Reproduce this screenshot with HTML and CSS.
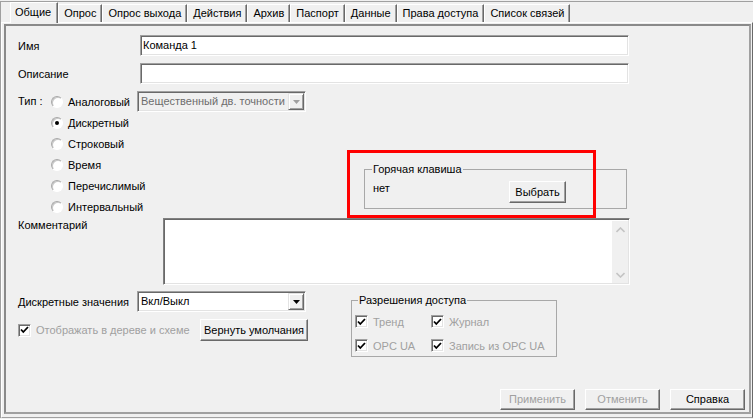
FILE: index.html
```html
<!DOCTYPE html>
<html lang="ru">
<head>
<meta charset="utf-8">
<title>Свойства</title>
<link rel="stylesheet" href="styles.css">
</head>
<body>
<div class="window">
  <div class="tabs">
    <div class="tab active">Общие</div>
    <div class="tab">Опрос</div>
    <div class="tab">Опрос выхода</div>
    <div class="tab">Действия</div>
    <div class="tab">Архив</div>
    <div class="tab">Паспорт</div>
    <div class="tab">Данные</div>
    <div class="tab">Права доступа</div>
    <div class="tab">Список связей</div>
  </div>
  <div class="page">
    <div class="frame">
      <div class="content">
        <div class="row">
          <span class="lbl lbl-main">Имя</span>
          <div class="edit">Команда 1</div>
        </div>
        <div class="row">
          <span class="lbl lbl-main">Описание</span>
          <div class="edit"></div>
        </div>

        <div class="type">
          <div class="type-left">
            <span class="type-lbl">Тип :</span>
            <div class="radios">
              <div class="rrow first">
                <span class="rl"><span class="radio"></span><span>Аналоговый</span></span>
                <div class="select disabled">
                  <span class="value">Вещественный дв. точности</span>
                  <span class="dd"><svg width="7" height="4" viewBox="0 0 7 4"><path d="M0 0h7L3.5 4z"/></svg></span>
                </div>
              </div>
              <div class="rrow"><span class="radio checked"></span><span>Дискретный</span></div>
              <div class="rrow"><span class="radio"></span><span>Строковый</span></div>
              <div class="rrow"><span class="radio"></span><span>Время</span></div>
              <div class="rrow"><span class="radio"></span><span>Перечислимый</span></div>
              <div class="rrow"><span class="radio"></span><span>Интервальный</span></div>
            </div>
          </div>
          <fieldset class="group hotkey">
            <legend>Горячая клавиша</legend>
            <div class="hk-row">
              <span class="hk-val">нет</span>
              <button class="btn btn-choose" type="button">Выбрать</button>
            </div>
          </fieldset>
        </div>

        <div class="row comment-row">
          <span class="lbl lbl-comment">Комментарий</span>
          <div class="memo">
            <div class="memo-text"></div>
            <div class="vscroll">
              <svg width="9" height="6" viewBox="0 0 9 6"><path d="M0.5 5L4.5 1L8.5 5" fill="none" stroke="#c4c4c4" stroke-width="1.6"/></svg>
              <svg width="9" height="6" viewBox="0 0 9 6"><path d="M0.5 1L4.5 5L8.5 1" fill="none" stroke="#c4c4c4" stroke-width="1.6"/></svg>
            </div>
          </div>
        </div>

        <div class="bottom">
          <div class="bottom-left">
            <div class="disc-row">
              <span class="lbl lbl-disc">Дискретные значения</span>
              <div class="select">
                <span class="value">Вкл/Выкл</span>
                <span class="dd"><svg width="7" height="4" viewBox="0 0 7 4"><path d="M0 0h7L3.5 4z"/></svg></span>
              </div>
            </div>
            <div class="show-row">
              <span class="show-lbl">
                <span class="check"><svg width="9" height="8" viewBox="0 0 9 8"><path d="M1 3.5L3.3 6L8 1" fill="none" stroke="#000" stroke-width="1.8"/></svg></span>
                <span class="muted">Отображать в дереве и схеме</span>
              </span>
              <button class="btn btn-default" type="button">Вернуть умолчания</button>
            </div>
          </div>
          <fieldset class="group perm">
            <legend>Разрешения доступа</legend>
            <div class="perm-grid">
              <span class="citem"><span class="check"><svg width="9" height="8" viewBox="0 0 9 8"><path d="M1 3.5L3.3 6L8 1" fill="none" stroke="#000" stroke-width="1.8"/></svg></span><span class="muted">Тренд</span></span>
              <span class="citem"><span class="check"><svg width="9" height="8" viewBox="0 0 9 8"><path d="M1 3.5L3.3 6L8 1" fill="none" stroke="#000" stroke-width="1.8"/></svg></span><span class="muted">Журнал</span></span>
              <span class="citem"><span class="check"><svg width="9" height="8" viewBox="0 0 9 8"><path d="M1 3.5L3.3 6L8 1" fill="none" stroke="#000" stroke-width="1.8"/></svg></span><span class="muted">OPC UA</span></span>
              <span class="citem"><span class="check"><svg width="9" height="8" viewBox="0 0 9 8"><path d="M1 3.5L3.3 6L8 1" fill="none" stroke="#000" stroke-width="1.8"/></svg></span><span class="muted">Запись из OPC UA</span></span>
            </div>
          </fieldset>
        </div>
      </div>

      <div class="actions">
        <button class="btn btn-act" type="button" disabled>Применить</button>
        <button class="btn btn-act" type="button" disabled>Отменить</button>
        <button class="btn btn-act" type="button">Справка</button>
      </div>

      <div class="highlight"></div>
    </div>
  </div>
</div>
</body>
</html>
```
FILE: styles.css
```css
* { box-sizing: border-box; }
html, body { margin: 0; padding: 0; }
body {
  width: 753px;
  height: 419px;
  overflow: hidden;
  background: #f0f0f0;
  font-family: "Liberation Sans", Arial, sans-serif;
  font-size: 11px;
  color: #000;
}

.window {
  margin-top: 1px;
  width: 753px;
  height: 417px;
  border-top: 1px solid #a0a0a0;
  border-left: 1px solid #a0a0a0;
  display: flex;
  flex-direction: column;
}

/* tabs */
.tabs {
  flex: none;
  height: 20px;
  display: flex;
  align-items: flex-end;
  padding-left: 9px;
}
.tab {
  height: 18px;
  line-height: 17px;
  padding: 0 5px 0 5px;
  border-top: 1px solid #fff;
  border-left: 1px solid #fff;
  border-right: 1px solid #696969;
  box-shadow: inset -1px 0 0 #a0a0a0;
  white-space: nowrap;
}
.tab.active {
  height: 21px;
  line-height: 18px;
  margin-bottom: -1px;
  position: relative;
  z-index: 1;
  background: #f0f0f0;
  padding: 0 6px 0 4px;
}

.page {
  flex: 1;
  display: flex;
  border-top: 1px solid #fff;
  border-left: 1px solid #fff;
  border-right: 1px solid #696969;
  border-bottom: 1px solid #a0a0a0;
  padding: 1px 1px 3px 2px;
}
.frame {
  flex: 1;
  position: relative;
  display: flex;
  flex-direction: column;
  border: 2px solid #a0a0a0;
  border-top-color: #8a8a8a;
  border-left-color: #8a8a8a;
}

.content {
  padding: 9px 0 0 12px;
}

.row {
  display: flex;
  align-items: center;
  height: 21px;
  margin-bottom: 7px;
}
.lbl { display: block; white-space: nowrap; }
.lbl-main { width: 122px; }

.edit {
  width: 489px;
  height: 21px;
  background: #fff;
  border: 1px solid;
  border-color: #a0a0a0 #fff #fff #a0a0a0;
  box-shadow: inset 1px 1px 0 #696969, inset -1px -1px 0 #e3e3e3;
  padding: 2px 0 0 2px;
  line-height: 15px;
}

/* type block */
.type {
  display: flex;
  height: 127px;
}
.type-left {
  width: 346px;
  display: flex;
}
.type-lbl {
  width: 33px;
  height: 20px;
  line-height: 20px;
}
.radios { display: flex; flex-direction: column; }
.rrow {
  display: flex;
  align-items: center;
  height: 21.2px;
}
.rrow.first { height: 21px; }
.rl { display: flex; align-items: center; width: 86px; }
.radio {
  width: 12px;
  height: 12px;
  border-radius: 50%;
  background: #fff;
  border: 1px solid;
  border-color: #a8a8a8 #fff #fff #a8a8a8;
  box-shadow: inset 1px 1px 0 #c8c8c8;
  margin-right: 5px;
  flex: none;
  position: relative;
}
.radio.checked::after {
  content: "";
  position: absolute;
  left: 3px;
  top: 3px;
  width: 4px;
  height: 4px;
  border-radius: 50%;
  background: #000;
}

.select {
  width: 169px;
  height: 21px;
  display: flex;
  background: #fff;
  border: 1px solid;
  border-color: #a0a0a0 #fff #fff #a0a0a0;
  box-shadow: inset 1px 1px 0 #696969, inset -1px -1px 0 #e3e3e3;
  padding: 2px 1px 1px 2px;
}
.select .value {
  flex: 1;
  padding-left: 1px;
  line-height: 15px;
  white-space: nowrap;
  overflow: hidden;
}
.select .dd {
  width: 16px;
  height: 17px;
  margin-top: -1px;
  background: #f0f0f0;
  border: 1px solid;
  border-color: #e3e3e3 #696969 #696969 #e3e3e3;
  box-shadow: inset 1px 1px 0 #fff, inset -1px -1px 0 #a0a0a0;
  display: flex;
  align-items: center;
  justify-content: center;
}
.select .dd svg { fill: #000; }
.select.disabled { background: #f0f0f0; }
.select.disabled .value { color: #6d6d6d; }
.select.disabled .dd svg { fill: #a0a0a0; }

/* group boxes */
.group {
  margin: 0;
  min-width: 0;
  border: 1px solid #a8a8a8;
  border-radius: 0;
}
.group legend {
  padding: 0 1px;
  line-height: 13px;
}
.hotkey {
  margin-top: 72px;
  width: 263px;
  height: 46px;
  padding: 5px 0 0 7px;
}
.hk-row { display: flex; align-items: flex-start; }
.hk-val { width: 136px; margin: 1px 0 0 1px; line-height: 13px; }

.btn {
  font-family: inherit;
  font-size: 11px;
  color: #000;
  background: #f0f0f0;
  border: 1px solid;
  border-color: #fff #696969 #696969 #fff;
  box-shadow: inset -1px -1px 0 #a0a0a0;
  border-radius: 0;
  padding: 0;
  margin: 0;
  height: 22px;
  line-height: 18px;
}
.btn:disabled { color: #a0a0a0; }
.btn-choose { width: 57px; }
.btn-default { width: 108px; }

/* comment */
.comment-row {
  align-items: flex-start;
  height: 67px;
  margin-bottom: 6px;
}
.lbl-comment { width: 145px; padding-top: 1px; line-height: 13px; }
.memo {
  width: 467px;
  height: 67px;
  display: flex;
  background: #fff;
  border: 1px solid;
  border-color: #808080 #fff #fff #808080;
  box-shadow: inset 1px 1px 0 #696969, inset -1px -1px 0 #e3e3e3;
  padding: 2px 1px 1px 2px;
}
.memo-text { flex: 1; }
.vscroll {
  width: 16px;
  background: #f0f0f0;
  display: flex;
  flex-direction: column;
  justify-content: space-between;
  align-items: center;
  padding: 6px 0 5px;
}

/* bottom */
.bottom { display: flex; }
.bottom-left { width: 333px; }
.disc-row { display: flex; align-items: center; height: 21px; }
.lbl-disc { width: 119px; }
.show-row {
  display: flex;
  align-items: center;
  margin-top: 7px;
  height: 22px;
}
.show-lbl { width: 182px; display: flex; align-items: center; }
.muted { color: #a0a0a0; white-space: nowrap; }

.check {
  width: 13px;
  height: 13px;
  flex: none;
  background: #fff;
  border: 1px solid;
  border-color: #a0a0a0 #fff #fff #a0a0a0;
  box-shadow: inset 1px 1px 0 #696969, inset -1px -1px 0 #e3e3e3;
  display: flex;
  align-items: center;
  justify-content: center;
  margin-right: 5px;
}
.check svg { margin: 0 0 0 0; }

.perm {
  margin-top: 3px;
  width: 206px;
  height: 63px;
  padding: 7px 0 0 3px;
}
.perm legend { margin-left: 3px; }
.perm-grid {
  display: grid;
  grid-template-columns: 76px auto;
  row-gap: 9px;
}
.citem { display: flex; align-items: center; height: 15px; }

/* dialog buttons */
.actions {
  margin-top: auto;
  display: flex;
  justify-content: flex-end;
  gap: 10px;
  padding: 0 4px 2px 0;
}
.btn-act { width: 75px; height: 21px; line-height: 17px; }

/* annotation */
.highlight {
  position: absolute;
  left: 341px;
  top: 124px;
  width: 249px;
  height: 68px;
  border: 3px solid #ff0000;
  pointer-events: none;
}
```
